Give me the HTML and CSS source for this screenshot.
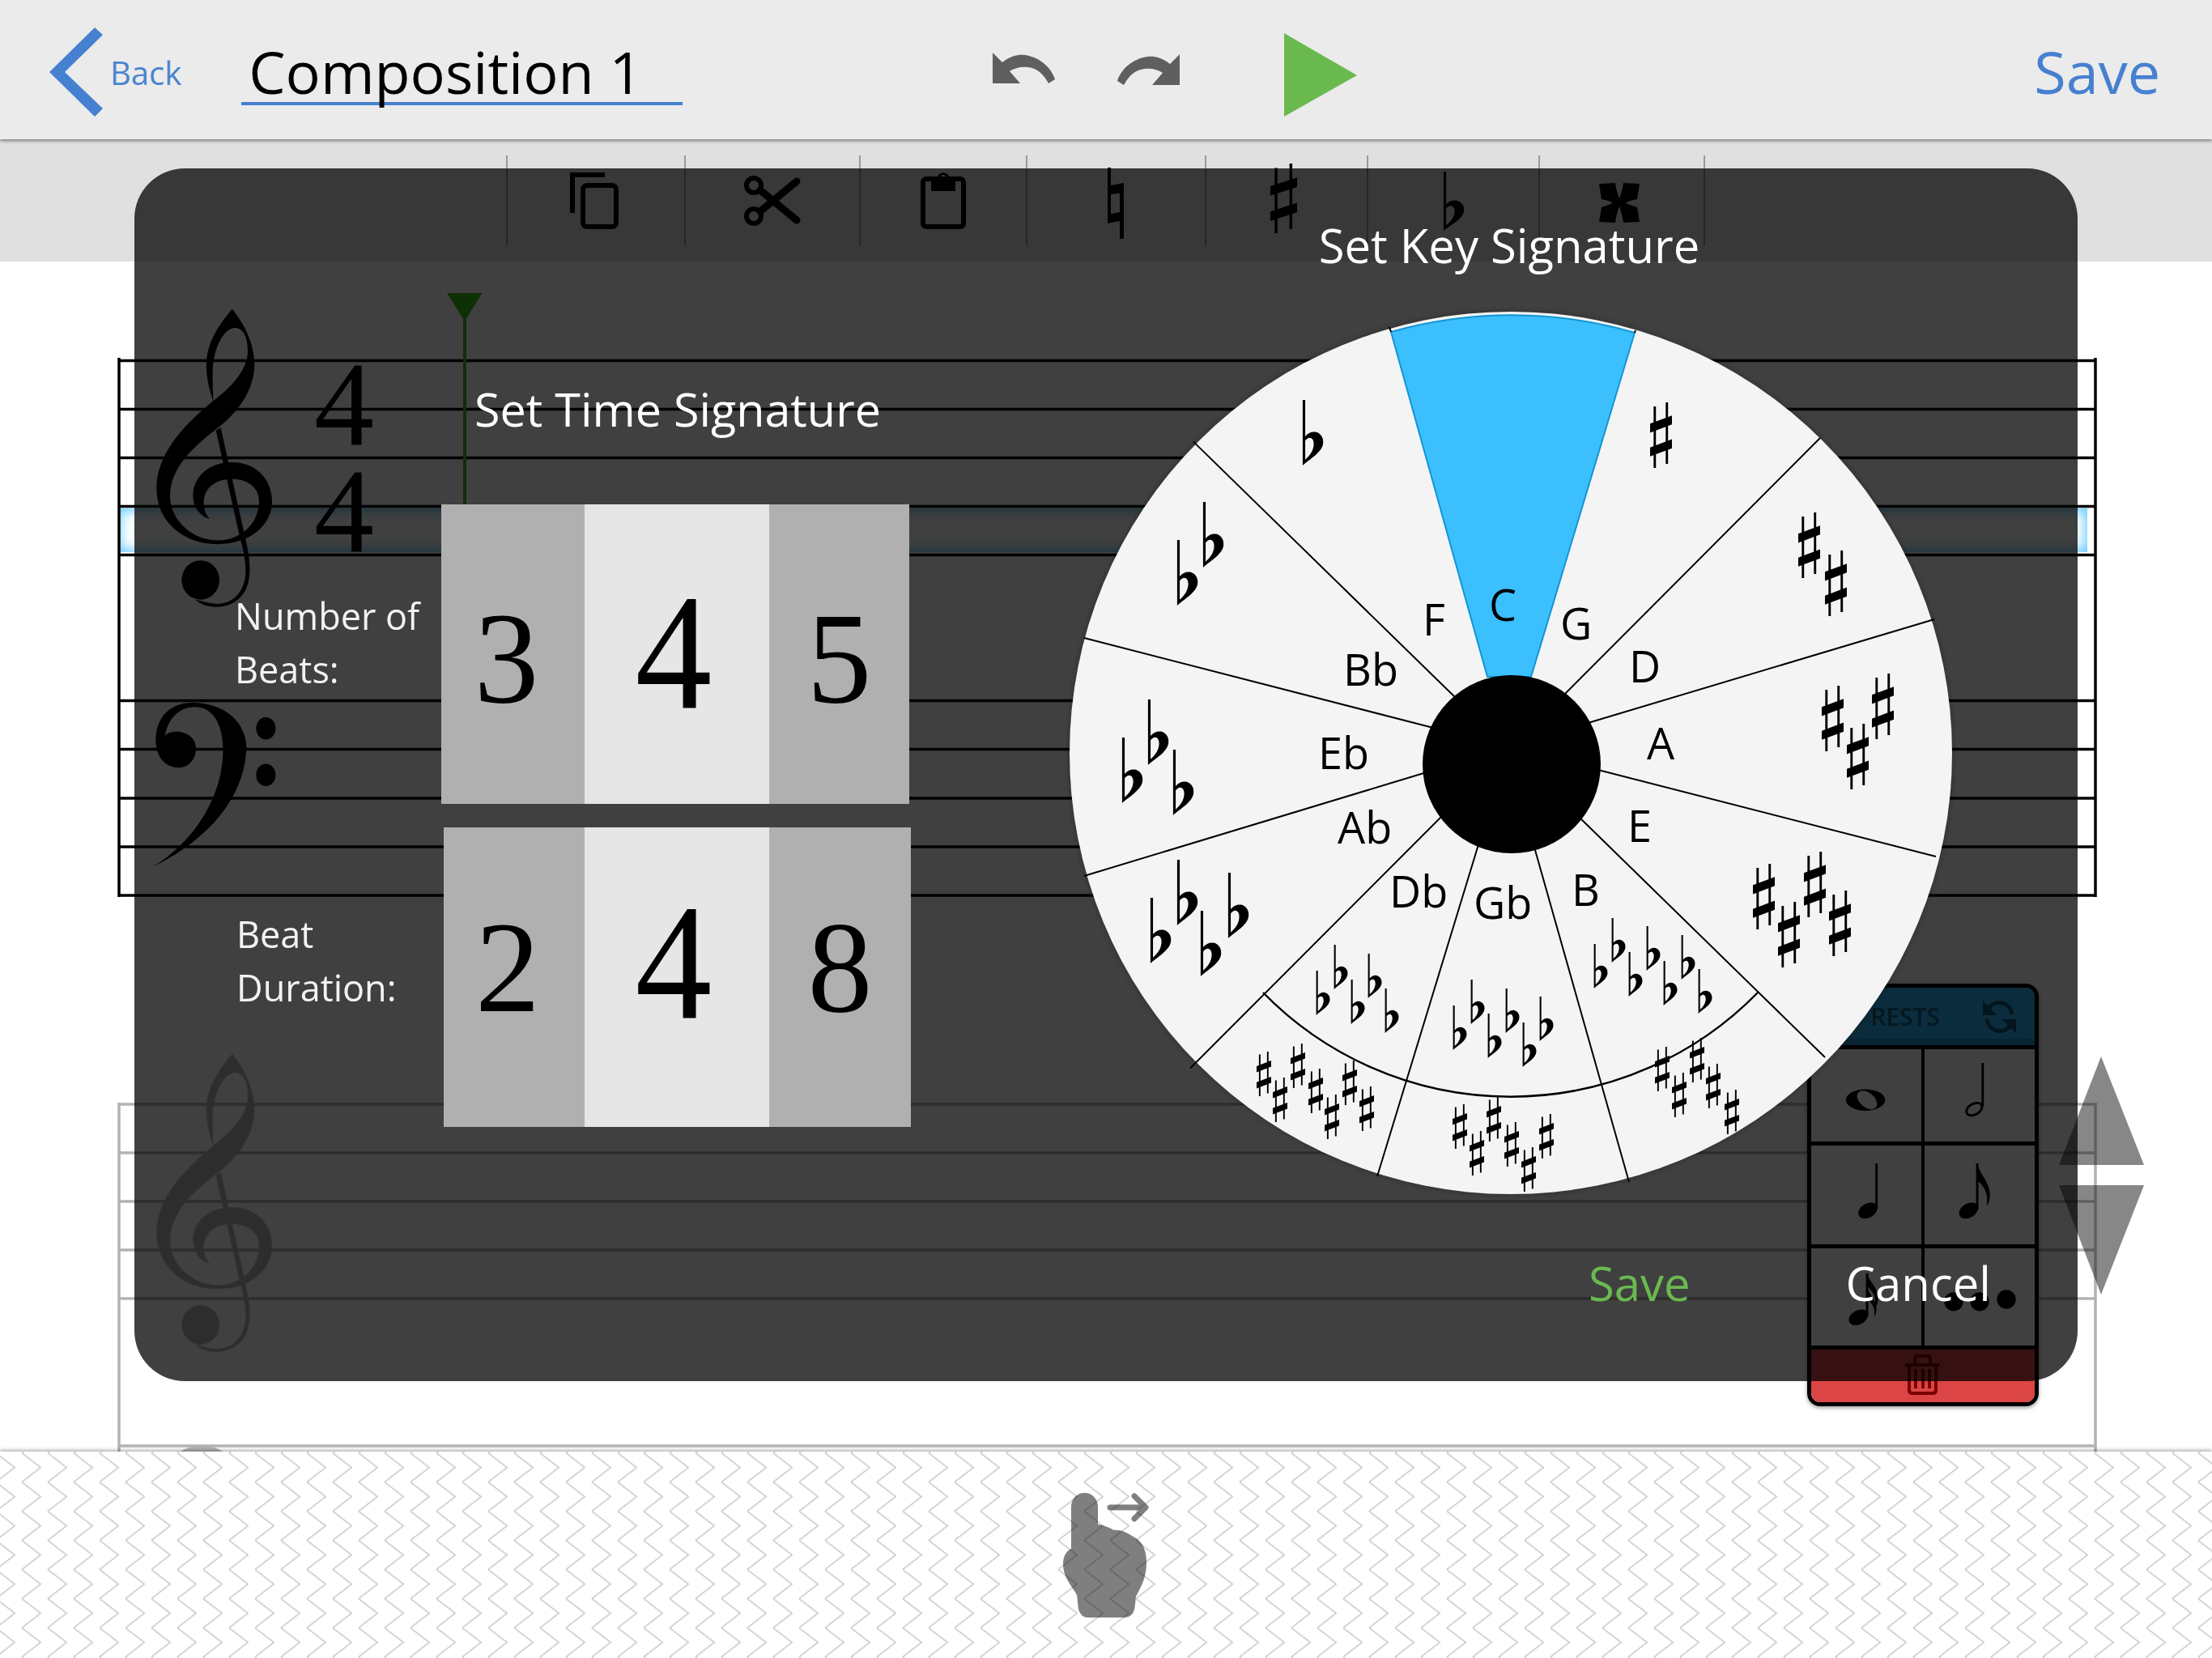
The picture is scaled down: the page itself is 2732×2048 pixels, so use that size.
FILE: index.html
```html
<!DOCTYPE html>
<html>
  <head>
    <link rel="stylesheet" href="styles.css">
  </head>
  <body>
    <!-- shared music glyphs -->
    <svg class="defs">
      <symbol id="flat" viewBox="0 0 30 90" preserveAspectRatio="none">
        <path fill-rule="evenodd" d="M1 0H4.500V50C8 45 14 43 19 44C26 46 30 52 29 60C28 68 20 75 12 81C8 84 4 87 1 90ZM4.500 56V82C10 77 15 71 16 63C17 56 14 52 11 52C8 52 6 54 4.500 56Z"/>
      </symbol>
      <symbol id="sharp" viewBox="0 0 28 80" preserveAspectRatio="none">
        <path d="M4.500 5H7.500V80H4.500ZM20 0H23V75H20ZM0 26L28 16V27L0 37ZM0 55L28 45V56L0 66Z"/>
      </symbol>
      <symbol id="treble" viewBox="0 0 1500 1568" preserveAspectRatio="none">
        <path d="M560 145C600 190 643 260 643 340C640 430 580 500 515 550C440 605 332 680 330 790C330 880 420 945 505 945C600 945 660 880 660 810C660 760 615 733 560 733C490 733 455 770 455 815C455 840 465 860 478 872C440 860 415 830 415 790C415 720 480 675 560 675C650 675 708 735 708 810C708 890 630 958 505 958C380 958 280 880 280 765C280 640 390 540 487 465C550 420 618 360 618 290C618 240 600 210 570 210C530 210 490 280 488 360C487 400 490 440 490 465C475 420 463 380 465 330C468 260 510 200 560 145Z"/>
        <path d="M500 565L518 555L612 950C625 1000 630 1050 620 1090C605 1150 550 1178 495 1175C470 1175 440 1165 425 1150C450 1155 480 1165 510 1165C570 1160 605 1120 610 1060C612 1020 600 970 590 940Z"/>
        <ellipse cx="443" cy="1082" rx="70" ry="68"/>
      </symbol>
      <symbol id="bass" viewBox="0 0 1568 1568" preserveAspectRatio="none">
        <path d="M133 1432C230 1370 300 1270 305 1150C308 1090 270 1035 205 1035C165 1035 138 1070 138 1125C138 1165 155 1192 180 1192C200 1192 212 1170 212 1145C212 1120 195 1105 175 1105C165 1105 158 1110 155 1115C160 1075 180 1045 210 1045C245 1045 262 1090 262 1150C262 1260 210 1370 133 1432Z"/>
        <ellipse cx="341" cy="1097" rx="18" ry="27"/>
        <ellipse cx="341" cy="1210" rx="18" ry="27"/>
      </symbol>
    </svg>

    <div class="app">
      <header class="topbar">
        <a class="back">
          <svg class="chevron" viewBox="61 34 66 110"><path d="M117 34L127 43L80 89L127 134L117 144L61 89Z"/></svg>
          <span class="back-label">Back</span>
        </a>
        <div class="comp-title">Composition 1</div>
        <svg class="history undo" viewBox="1225 65 77 38"><path d="M1225 65L1237 77C1248 68 1258 67 1265 68C1285 71 1298 85 1302 98L1294 103C1288 92 1280 84 1268 83C1260 82 1252 84 1246 88L1259 103H1225Z"/></svg>
        <svg class="history redo" viewBox="1225 65 77 38"><g transform="matrix(-1 0 0 1 2527 0)"><path d="M1225 65L1237 77C1248 68 1258 67 1265 68C1285 71 1298 85 1302 98L1294 103C1288 92 1280 84 1268 83C1260 82 1252 84 1246 88L1259 103H1225Z"/></g></svg>
        <svg class="play" viewBox="0 0 90 103"><path d="M0 0L90 52L0 103Z"/></svg>
        <span class="save-link">Save</span>
      </header>

      <div class="toolbar">
        <div class="tool">
          <svg class="tool-nudge" width="60" height="70" viewBox="703 213 60 70"><path d="M703 213H746V219H709V263H703Z"/><rect class="ink-line" x="719" y="229" width="41" height="51" rx="5"/></svg>
        </div>
        <div class="tool">
          <svg width="70" height="62" viewBox="919 217 70 62"><circle class="ink-line" cx="931" cy="229" r="9"/><circle class="ink-line" cx="931" cy="267" r="9"/><path class="blade" d="M939 235L984 272M939 261L984 224"/></svg>
        </div>
        <div class="tool">
          <svg width="56" height="70" viewBox="1137 213 56 70"><rect class="ink-line" x="1140" y="221" width="50" height="59" rx="4"/><path fill-rule="evenodd" d="M1150 221H1157C1158 211 1172 211 1173 221H1180V236H1150ZM1165 216A3 3 0 1 0 1165 222A3 3 0 1 0 1165 216Z"/></svg>
        </div>
        <div class="tool tool-low">
          <svg width="21" height="88" viewBox="0 0 21 88"><path d="M0 0H4V68H0ZM15 20H20V88H15ZM4 22L20 19V31L4 33ZM0 58L15 55V66L0 69Z"/></svg>
        </div>
        <div class="tool tool-high">
          <svg width="33" height="86"><use href="#sharp" width="33" height="86"/></svg>
        </div>
        <div class="tool">
          <svg width="27" height="73"><use href="#flat" width="27" height="73"/></svg>
        </div>
        <div class="tool tool-cross">
          <svg width="50" height="49" viewBox="0 0 50 49"><path d="M0 1L20 0C21 8 23 14 25 19C27 14 29 8 30 0L50 1L47 20C42 21 37 22 33 24.500C37 27 42 28 47 30L50 48L30 49C29 41 27 34 25 29C23 34 21 41 20 49L0 48L3 30C8 28 13 27 17 24.500C13 22 8 21 3 20Z"/></svg>
        </div>
      </div>

      <main class="score">
        <div class="staff-highlight"></div>
        <svg class="score-canvas" viewBox="0 323 2732 1470">
          <g class="staff">
            <path d="M147 445.500H2588M147 505.500H2588M147 565.500H2588M147 625.500H2588M147 685.500H2588"/>
            <path d="M147 865.500H2588M147 925.500H2588M147 986H2588M147 1046H2588M147 1106H2588"/>
            <path d="M147 442V1108M2588 442V1108"/>
          </g>
          <use href="#treble" x="100" y="330" width="500" height="560"/>
          <use href="#bass" x="100" y="340" width="1050" height="800"/>
          <text class="ts-digit" x="388" y="549">4</text>
          <text class="ts-digit" x="388" y="681">4</text>
          <path class="playhead" d="M552 362H595.500L576 393.500V640H572V393.500Z"/>

          <g class="faded">
            <g class="staff">
              <path d="M147 1364H2588M147 1424H2588M147 1484H2588M147 1544H2588M147 1604H2588M147 1786H2588"/>
              <path d="M147 1362V1793M2588 1362V1793"/>
            </g>
            <use href="#treble" x="100" y="1250" width="500" height="560"/>
            <ellipse cx="249" cy="1802" rx="32" ry="16"/>
          </g>

          <path class="scroll-arrow" d="M2595 1305L2648 1439H2543ZM2595 1599L2648 1464H2543Z"/>
        </svg>
      </main>

      <footer class="footer">
        <svg class="footer-canvas" viewBox="0 1793 2732 255">
          <defs>
            <pattern id="zigzag" width="32" height="36" patternUnits="userSpaceOnUse" patternTransform="translate(25 30.700)">
              <path d="M2 0L25.300 18L2 36"/>
            </pattern>
          </defs>
          <rect class="zigzag-fill" y="1793" width="2732" height="255"/>
          <path class="swipe-hand" d="M1323 1861A16.500 17 0 0 1 1356 1861V1883C1365 1884 1372 1888 1376 1890C1388 1889 1396 1896 1403 1900C1412 1906 1416 1916 1416 1930C1416 1950 1408 1962 1403 1972C1402 1980 1402 1990 1398 1994C1395 1997 1392 1998 1388 1998H1343C1338 1998 1334 1994 1332 1988C1331 1982 1331 1976 1330 1970C1323 1958 1313 1948 1313 1932C1313 1922 1317 1916 1323 1913Z"/>
          <path class="swipe-arrow" d="M1371 1862H1414M1401 1848L1415 1862L1401 1876"/>
        </svg>
      </footer>

      <aside class="palette">
        <div class="palette-head">
          <span class="palette-title">RESTS</span>
          <svg class="refresh" viewBox="0 0 41 44">
            <path class="refresh-line" d="M8 10A16 16 0 0 1 36 19M33 34A16 16 0 0 1 5 25"/>
            <path d="M0 2V20H18ZM41 42V25H23Z"/>
          </svg>
        </div>
        <div class="note-grid">
          <div class="note-cell">
            <svg viewBox="0 0 140 120"><ellipse cx="69" cy="66" rx="25.500" ry="14"/><ellipse class="hole" cx="71" cy="66" rx="15" ry="9.500" transform="rotate(40 71 66)"/></svg>
          </div>
          <div class="note-cell">
            <svg viewBox="0 0 140 120"><path class="stem" d="M74 18V74"/><ellipse class="hollow" cx="63" cy="78" rx="11" ry="7" transform="rotate(-30 63 78)"/></svg>
          </div>
          <div class="note-cell">
            <svg viewBox="0 0 140 120"><path class="stem" d="M83 20V78"/><ellipse cx="72" cy="80" rx="13" ry="9" transform="rotate(-30 72 80)"/></svg>
          </div>
          <div class="note-cell">
            <svg viewBox="0 0 140 120"><path class="stem" d="M67 20V78"/><ellipse cx="56" cy="80" rx="13" ry="9" transform="rotate(-30 56 80)"/><path d="M67 18C69 34 83 42 83 60C83 68 81 72 79 74C81 62 78 50 67 42Z"/></svg>
          </div>
          <div class="note-cell">
            <svg viewBox="0 0 140 120"><path class="stem" d="M71 30V85"/><ellipse cx="60" cy="86" rx="13" ry="9" transform="rotate(-30 60 86)"/><path d="M71 28C73 42 85 46 85 62C85 68 83 72 81 74C83 62 80 54 71 46ZM71 46C73 58 83 62 83 76C83 80 81 84 80 86C82 76 78 68 71 62Z"/></svg>
          </div>
          <div class="note-cell">
            <svg viewBox="0 0 140 120"><circle cx="37" cy="66" r="12"/><circle cx="70" cy="66" r="12"/><circle cx="104" cy="63" r="12"/></svg>
          </div>
        </div>
        <div class="palette-trash">
          <svg viewBox="0 0 44 50"><path class="trash-line" d="M0 13H43M12 11V6Q12 2 16 2H27Q31 2 31 6V11M5 15V44Q5 48 9 48H34Q38 48 38 44V15M13 18V42M22 18V42M30 18V42"/></svg>
        </div>
      </aside>

      <div class="modal">
        <section class="time-sig">
          <h2 class="modal-title time-title">Set Time Signature</h2>
          <div class="picker-row">
            <div class="picker-label">Number of<br>Beats:</div>
            <div class="picker">
              <div class="pick pick-side pick-left">3</div>
              <div class="pick pick-mid"><span class="pick-digit">4</span></div>
              <div class="pick pick-side pick-right">5</div>
            </div>
          </div>
          <div class="picker-row picker-row-two">
            <div class="picker-label">Beat<br>Duration:</div>
            <div class="picker">
              <div class="pick pick-side pick-left">2</div>
              <div class="pick pick-mid"><span class="pick-digit">4</span></div>
              <div class="pick pick-side pick-right">8</div>
            </div>
          </div>
        </section>

        <section class="key-sig">
          <h2 class="modal-title key-title">Set Key Signature</h2>
          <svg class="wheel" viewBox="1316 380 1100 1100">
            <circle class="wheel-face" cx="1866" cy="930" r="545"/>
            <path class="wedge-on" d="M1837 836L1718 410A545 545 0 0 1 2019 411L1891 836Z"/>
            <g class="wheel-lines">
              <path d="M1718 410L1716 404M2019 411L2020 408M1930 860L2248 541M1958 894L2389 765M1970 950L2391 1058M1950 1009L2254 1306M1894 1043L2012 1460M1827 1040L1701 1453M1783 1006L1470 1319.500M1765 953L1339 1082M1774 900L1339 788M1800 864L1474 545.600"/>
              <path class="wheel-arc" d="M1560 1226A427 427 0 0 0 2171 1226"/>
            </g>
            <circle cx="1867" cy="944" r="110"/>

            <g class="key-names">
              <text x="1757" y="785">F</text>
              <text x="1839" y="767">C</text>
              <text x="1927" y="790">G</text>
              <text x="2012" y="843">D</text>
              <text x="2034" y="938">A</text>
              <text x="2010" y="1040">E</text>
              <text x="1941" y="1119">B</text>
              <text x="1820" y="1135">Gb</text>
              <text x="1716" y="1121">Db</text>
              <text x="1652" y="1042">Ab</text>
              <text x="1628" y="950">Eb</text>
              <text x="1659" y="847">Bb</text>
            </g>

            <!-- flats -->
            <g>
              <use href="#flat" x="1608" y="494" width="27" height="81"/>
              <use href="#flat" x="1453" y="667" width="27" height="81"/>
              <use href="#flat" x="1485" y="620" width="27" height="81"/>
              <use href="#flat" x="1385" y="911" width="27" height="81"/>
              <use href="#flat" x="1417" y="864" width="27" height="81"/>
              <use href="#flat" x="1448" y="926" width="27" height="81"/>
              <use href="#flat" x="1420" y="1109" width="27" height="81"/>
              <use href="#flat" x="1453" y="1062" width="27" height="81"/>
              <use href="#flat" x="1482" y="1125" width="27" height="81"/>
              <use href="#flat" x="1516" y="1078" width="27" height="81"/>
              <use href="#flat" x="1625" y="1199" width="18" height="55"/>
              <use href="#flat" x="1647" y="1167" width="18" height="55"/>
              <use href="#flat" x="1668" y="1210" width="18" height="55"/>
              <use href="#flat" x="1689" y="1178" width="18" height="55"/>
              <use href="#flat" x="1710" y="1221" width="18" height="55"/>
              <use href="#flat" x="1794" y="1242" width="18" height="55"/>
              <use href="#flat" x="1816" y="1210" width="18" height="55"/>
              <use href="#flat" x="1837" y="1252" width="18" height="55"/>
              <use href="#flat" x="1859" y="1221" width="18" height="55"/>
              <use href="#flat" x="1880" y="1263" width="18" height="55"/>
              <use href="#flat" x="1901" y="1231" width="18" height="55"/>
              <use href="#flat" x="1968" y="1166" width="18" height="55"/>
              <use href="#flat" x="1990" y="1134" width="18" height="55"/>
              <use href="#flat" x="2011" y="1176" width="18" height="55"/>
              <use href="#flat" x="2033" y="1144" width="18" height="55"/>
              <use href="#flat" x="2054" y="1187" width="18" height="55"/>
              <use href="#flat" x="2076" y="1155" width="18" height="55"/>
              <use href="#flat" x="2097" y="1197" width="18" height="55"/>
            </g>

            <!-- sharps -->
            <g>
              <use href="#sharp" x="2038" y="497" width="27" height="81"/>
              <use href="#sharp" x="2221" y="633" width="27" height="81"/>
              <use href="#sharp" x="2254" y="680" width="27" height="81"/>
              <use href="#sharp" x="2250" y="847" width="27" height="81"/>
              <use href="#sharp" x="2312" y="832" width="27" height="81"/>
              <use href="#sharp" x="2281" y="894" width="27" height="81"/>
              <use href="#sharp" x="2165" y="1067" width="27" height="81"/>
              <use href="#sharp" x="2228" y="1052" width="27" height="81"/>
              <use href="#sharp" x="2196" y="1114" width="27" height="81"/>
              <use href="#sharp" x="2259" y="1100" width="27" height="81"/>
              <use href="#sharp" x="2044" y="1293" width="18" height="55"/>
              <use href="#sharp" x="2087" y="1282" width="18" height="55"/>
              <use href="#sharp" x="2065" y="1325" width="18" height="55"/>
              <use href="#sharp" x="2107" y="1314" width="18" height="55"/>
              <use href="#sharp" x="2130" y="1346" width="18" height="55"/>
              <use href="#sharp" x="1794" y="1364" width="18" height="55"/>
              <use href="#sharp" x="1836" y="1355" width="18" height="55"/>
              <use href="#sharp" x="1815" y="1397" width="18" height="55"/>
              <use href="#sharp" x="1858" y="1386" width="18" height="55"/>
              <use href="#sharp" x="1879" y="1417" width="18" height="55"/>
              <use href="#sharp" x="1901" y="1376" width="18" height="55"/>
              <use href="#sharp" x="1552" y="1299" width="18" height="55"/>
              <use href="#sharp" x="1594" y="1289" width="18" height="55"/>
              <use href="#sharp" x="1572" y="1331" width="18" height="55"/>
              <use href="#sharp" x="1616" y="1320" width="18" height="55"/>
              <use href="#sharp" x="1636" y="1352" width="18" height="55"/>
              <use href="#sharp" x="1658" y="1310" width="18" height="55"/>
              <use href="#sharp" x="1679" y="1342" width="18" height="55"/>
            </g>
          </svg>
          <div class="modal-actions">
            <span class="action action-save">Save</span>
            <span class="action">Cancel</span>
          </div>
        </section>
      </div>
    </div>
  </body>
</html>
```

FILE: styles.css
```css
/* page frame */
body {
  margin: 0;
  font-family: "Open Sans", "Liberation Sans", sans-serif;
  background-color: #fff;
}

.defs {
  position: absolute;
  width: 0;
  height: 0;
}

.app {
  position: relative;
  display: flex;
  flex-direction: column;
  width: 2732px;
  height: 2048px;
  overflow: hidden;
}

/* top bar */
.topbar {
  position: relative;
  z-index: 1;
  display: flex;
  align-items: center;
  flex: none;
  height: 172px;
  padding-left: 61px;
  background-color: #ebebeb;
  box-shadow: 0 2px 4px rgba(0, 0, 0, 0.45);
}

.back {
  display: flex;
  align-items: center;
  gap: 9px;
  color: #4a84d0;
}

.chevron {
  width: 66px;
  height: 110px;
  margin-top: 6px;
  fill: #4680d0;
}

.back-label {
  font-size: 40px;
  margin-top: 6px;
}

.comp-title {
  width: 545px;
  height: 80px;
  margin: 8px 0 0 74px;
  padding-left: 9px;
  box-sizing: border-box;
  font-size: 72px;
  line-height: 76px;
  color: #000;
  background-color: transparent;
  border-bottom: 4px solid #4680d0;
}

.history {
  width: 77px;
  height: 38px;
  fill: #5f5f5f;
}

.undo {
  margin: -4px 0 0 383px;
}

.redo {
  margin: 0 0 0 77px;
}

.play {
  width: 90px;
  height: 103px;
  margin: 13px 0 0 129px;
  fill: #6ab94f;
}

.save-link {
  margin: 4px 0 0 836px;
  font-size: 72px;
  color: #4680d0;
}

/* edit toolbar */
.toolbar {
  display: grid;
  grid-template-columns: 220px 216px 206px 221px 200px 212px 206px;
  flex: none;
  height: 131px;
  padding: 20px 0 0 625px;
  background-color: #e0e0e0;
  box-sizing: content-box;
}

.tool {
  display: flex;
  align-items: center;
  justify-content: center;
  height: 112px;
  border-left: 2px solid #9a9a9a;
  box-sizing: border-box;
}

.tool:last-child {
  border-right: 2px solid #9a9a9a;
}

.tool-nudge {
  margin-right: 4px;
}

.tool-low svg {
  margin-top: 6px;
}

.tool-high svg {
  margin: -6px 8px 0 0;
}

.tool-cross svg {
  margin: 4px 6px 0 0;
}

.ink-line {
  fill: none;
  stroke: #000;
  stroke-width: 6;
}

.blade {
  fill: none;
  stroke: #000;
  stroke-width: 9;
  stroke-linecap: round;
}

/* score */
.score {
  position: relative;
  flex: 1;
}

.score-canvas {
  position: relative;
  display: block;
  width: 2732px;
  height: 1470px;
}

.staff-highlight {
  position: absolute;
  left: 146px;
  top: 305px;
  width: 2432px;
  height: 54px;
  box-shadow: inset 0 0 16px 2px #58c6ff;
}

.staff path {
  fill: none;
  stroke: #000;
  stroke-width: 3.500;
}

.faded {
  opacity: 0.3;
}

.ts-digit {
  font-family: "Liberation Serif", serif;
  font-size: 148px;
}

.playhead {
  fill: #3cbc14;
}

.scroll-arrow {
  fill: rgba(0, 0, 0, 0.47);
}

/* bottom strip */
.footer {
  position: relative;
  flex: none;
  height: 255px;
  background-color: #fff;
  box-shadow: 0 -2px 4px rgba(0, 0, 0, 0.3);
}

.footer-canvas {
  display: block;
  width: 2732px;
  height: 255px;
}

#zigzag path {
  fill: none;
  stroke: #cdcdcd;
  stroke-width: 1.600;
}

.zigzag-fill {
  fill: url(#zigzag);
}

.swipe-hand {
  fill: rgba(0, 0, 0, 0.5);
}

.swipe-arrow {
  fill: none;
  stroke: rgba(0, 0, 0, 0.5);
  stroke-width: 7;
  stroke-linecap: round;
  stroke-linejoin: round;
}

/* note palette */
.palette {
  position: absolute;
  left: 2232px;
  top: 1215px;
  display: flex;
  flex-direction: column;
  width: 286px;
  height: 522px;
  box-sizing: border-box;
  border: 5px solid #000;
  border-radius: 16px;
  background-color: #fff;
  box-shadow: 0 2px 5px rgba(0, 0, 0, 0.4);
  overflow: hidden;
}

.palette-head {
  display: flex;
  align-items: center;
  justify-content: flex-end;
  flex: none;
  gap: 53px;
  height: 76px;
  box-sizing: border-box;
  padding-right: 23px;
  background-color: #2eaeee;
  border-bottom: 5px solid #000;
  box-shadow: inset 0 -8px 0 #2890c6;
}

.palette-title {
  font-size: 30px;
  font-weight: 600;
  color: #10607f;
}

.refresh {
  width: 41px;
  height: 44px;
  fill: #0e5678;
}

.refresh-line {
  fill: none;
  stroke: #0e5678;
  stroke-width: 5;
}

.note-grid {
  display: grid;
  grid-template-columns: 136px 140px;
  grid-template-rows: 119px 127px 125px;
  flex: none;
}

.note-cell {
  border-bottom: 5px solid #000;
  box-sizing: border-box;
}

.note-cell:nth-child(even) {
  border-left: 4px solid #000;
}

.note-cell svg {
  display: block;
  width: 100%;
  height: 100%;
}

.stem {
  stroke: #000;
  stroke-width: 3;
}

.hollow {
  fill: none;
  stroke: #000;
  stroke-width: 3;
}

.hole {
  fill: #fff;
}

.palette-trash {
  display: flex;
  justify-content: center;
  flex: 1;
  padding-top: 6px;
  background-color: #dc4545;
}

.palette-trash svg {
  width: 44px;
  height: 50px;
}

.trash-line {
  fill: none;
  stroke: #7a0000;
  stroke-width: 4;
}

/* dialog */
.modal {
  position: absolute;
  left: 166px;
  top: 208px;
  display: flex;
  width: 2400px;
  height: 1498px;
  padding-top: 60px;
  box-sizing: border-box;
  border-radius: 62px;
  background-color: rgba(0, 0, 0, 0.75);
  color: #fff;
}

.modal-title {
  margin: 0;
  font-size: 57.500px;
  font-weight: 400;
  line-height: 70px;
}

.key-title {
  padding-right: 4px;
  font-size: 58px;
}

.time-sig {
  width: 1150px;
  padding-left: 124px;
  box-sizing: border-box;
}

.time-title {
  margin: 202px 0 83px 296px;
}

.picker-row {
  display: flex;
}

.picker-row-two {
  margin-top: 29px;
}

.picker-label {
  width: 255px;
  padding-top: 105px;
  font-size: 45px;
  line-height: 66px;
  color: #f2f2f2;
}

.picker-row-two .picker-label {
  padding: 99px 0 0 2px;
  width: 253px;
}

.picker {
  display: flex;
  height: 370px;
}

.picker-row-two .picker {
  margin-left: 3px;
}

.pick {
  display: flex;
  align-items: center;
  justify-content: center;
  box-sizing: border-box;
  font-family: "Liberation Serif", serif;
  color: #000;
}

.pick-side {
  padding-top: 10px;
  font-size: 160px;
  background-color: #b0b0b0;
}

.pick-left {
  width: 177px;
  padding-right: 16px;
}

.pick-right {
  width: 173px;
}

.pick-mid {
  width: 228px;
  padding: 0 8px 6px 0;
  font-size: 204px;
  background-color: #e6e6e6;
}

.pick-digit {
  display: inline-block;
  transform: scaleX(0.93);
}

.picker-row-two .pick-side {
  padding-top: 0;
  padding-bottom: 24px;
}

.picker-row-two .pick-left {
  width: 174px;
}

.picker-row-two .pick-right {
  width: 175px;
}

.picker-row-two .pick-mid {
  padding-bottom: 38px;
}

/* key wheel */
.key-sig {
  width: 1100px;
  text-align: center;
}

.wheel {
  display: block;
  width: 1100px;
  height: 1100px;
  margin-top: 42px;
}

.wheel-face {
  fill: #f4f4f4;
  filter: drop-shadow(0 0 5px rgba(0, 0, 0, 0.3));
}

.wedge-on {
  fill: #3bbffd;
  stroke: #1295d4;
  stroke-width: 2;
}

.wheel-lines path {
  fill: none;
  stroke: #000;
  stroke-width: 2;
}

.wheel-lines .wheel-arc {
  stroke-width: 2.500;
}

.key-names text {
  font-size: 54px;
}

.modal-actions {
  display: flex;
  gap: 192px;
  margin-top: 70px;
  padding-left: 646px;
}

.action {
  font-size: 58px;
  line-height: 70px;
}

.action-save {
  color: #6ab94f;
}
```
